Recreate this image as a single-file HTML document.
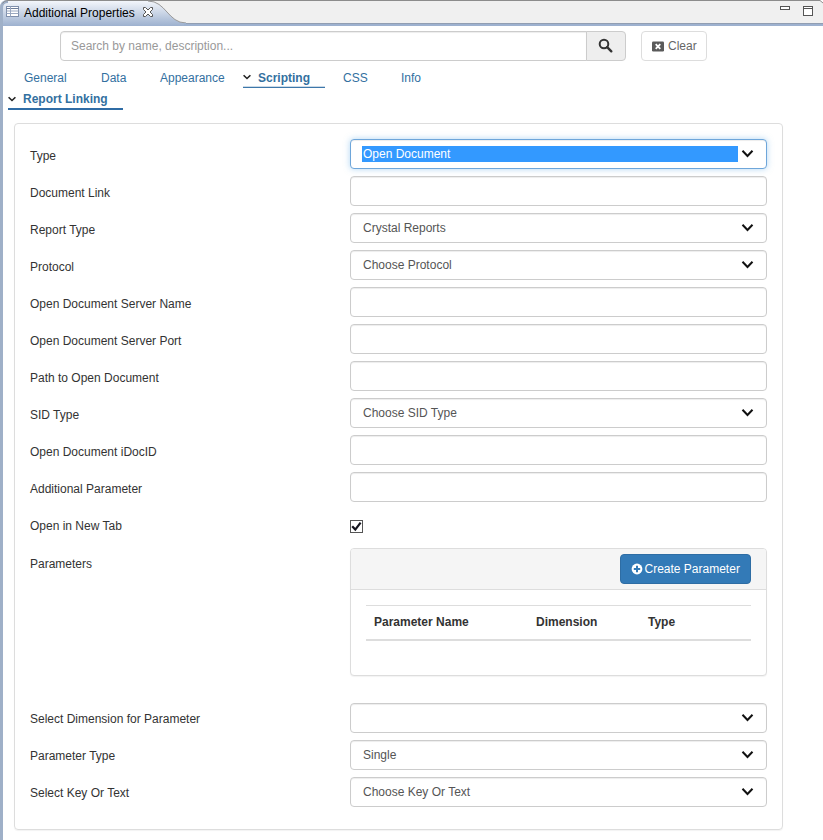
<!DOCTYPE html>
<html><head><meta charset="utf-8">
<style>
*{box-sizing:border-box}
html,body{margin:0;padding:0}
body{width:823px;height:840px;overflow:hidden;position:relative;background:#fff;font-family:"Liberation Sans",Arial,sans-serif;font-size:12px;color:#222}
.abs{position:absolute}
#hdr{display:none}
#lb{left:0;top:8px;width:3px;height:832px;background:#9fb0c8}
.tabtxt{left:24px;top:6px;font-size:12px;color:#000;white-space:nowrap}
#search{left:60px;top:31px;width:527px;height:30px;border:1px solid #ccc;border-radius:4px 0 0 4px;box-shadow:inset 0 1px 1px rgba(0,0,0,.075);padding:0 0 0 10px;line-height:28px;color:#999;font-size:12px}
#sbtn{left:586px;top:31px;width:40px;height:30px;border:1px solid #ccc;border-radius:0 4px 4px 0;background:#eee}
#clear{left:641px;top:31px;width:66px;height:30px;border:1px solid #ddd;border-radius:4px;background:#fff;color:#666;font-size:12px;line-height:28px}
.nav{top:71px;color:#33709f;font-size:12px;white-space:nowrap}
.panel{left:14px;top:123px;width:769px;height:707px;border:1px solid #ddd;border-radius:4px;box-shadow:0 1px 1px rgba(0,0,0,.05)}
.lbl{left:30px;font-size:12px;color:#333;white-space:nowrap}
.inp{left:350px;width:417px;height:30px;border:1px solid #ccc;border-radius:4px;box-shadow:inset 0 1px 1px rgba(0,0,0,.075);background:#fff;font-size:12px;color:#555;line-height:28px;padding-left:12px;white-space:nowrap}
.chev{position:absolute;right:12px;top:9px;width:13px;height:10px}
</style></head><body>
<div id="hdr" class="abs"></div>
<svg class="abs" style="left:0;top:0" width="823" height="27" viewBox="0 0 823 27">
<defs><linearGradient id="g" x1="0" y1="0" x2="0" y2="1"><stop offset="0" stop-color="#f3f6fb"/><stop offset="1" stop-color="#9db1cf"/></linearGradient></defs>
<rect x="0" y="0" width="823" height="7" fill="#fff"/>
<path d="M0,26 L0,7 Q0,0 7,0 L820,0 L823,3 L823,26 Z" fill="#f0f0f0"/>
<path d="M0,26 L0,7 Q0,1 7,1 L148,1 C166,1 168,23 186,23 L823,23 L823,26 Z" fill="url(#g)"/>
<path d="M1.5,8 Q1.5,1.5 8,1.5" fill="none" stroke="#9fb0c8" stroke-width="3"/><path d="M2.5,3.5 Q4,0.5 8,0.5 L820,0.5 L823,3" fill="none" stroke="#8c8c8c" stroke-width="1"/>
<path d="M148,1 C166,1 168,23 186,23" fill="none" stroke="#999" stroke-width="1"/>
<rect x="184" y="23" width="639" height="3" fill="#9db1cf"/>
<rect x="186" y="23" width="637" height="1" fill="#919eb2"/>
<g fill="none" stroke="#7f8fab" stroke-width="1"><rect x="6.5" y="6.5" width="12" height="10" fill="#fff"/><path d="M6.5,8.5h12" stroke="#6d7c98"/><path d="M6.5,11h12M6.5,13.5h12M10.5,6.5v10" stroke="#9aa8c0"/></g>
<g fill="#fff" stroke="#555" stroke-width="1"><path d="M143.5,7.5l2,0 2.5,2.5 2.5,-2.5 2,0 0,2 -2.5,2.5 2.5,2.5 0,2 -2,0 -2.5,-2.5 -2.5,2.5 -2,0 0,-2 2.5,-2.5 -2.5,-2.5z"/></g>
<rect x="780.5" y="6.5" width="9" height="3" fill="#fff" stroke="#555"/>
<rect x="803.5" y="6.5" width="9" height="9" fill="#fff" stroke="#555"/><rect x="803" y="8" width="10" height="1" fill="#555"/>
</svg>
<div id="lb" class="abs"></div>
<div class="abs tabtxt">Additional Properties</div>

<div id="search" class="abs">Search by name, description...</div>
<div id="sbtn" class="abs"><svg style="position:absolute;left:11px;top:6px" width="15" height="15" viewBox="0 0 15 15"><circle cx="6" cy="6" r="4.3" fill="none" stroke="#333" stroke-width="2"/><path d="M9.2,9.2L13.3,13.3" stroke="#333" stroke-width="2.4" stroke-linecap="round"/></svg></div>
<div id="clear" class="abs"><svg style="position:absolute;left:10px;top:9px" width="12" height="11" viewBox="0 0 12 11"><rect y="0.5" width="12" height="10" rx="1.2" fill="#5a5a5a"/><path d="M3.7,3.2L8.3,7.8M8.3,3.2L3.7,7.8" stroke="#fff" stroke-width="1.8"/></svg><span style="position:absolute;left:26px;top:0">Clear</span></div>

<div class="abs nav" style="left:24px">General</div>
<div class="abs nav" style="left:101px">Data</div>
<div class="abs nav" style="left:160px">Appearance</div>
<div class="abs nav" style="left:258px;font-weight:bold">Scripting</div>
<div class="abs nav" style="left:343px">CSS</div>
<div class="abs nav" style="left:401px">Info</div>
<div class="abs" style="left:243px;top:86px;width:82px;height:1px;background:#cbdae7"></div><div class="abs" style="left:243px;top:87px;width:82px;height:1px;background:#3d77aa"></div>
<svg class="abs" style="left:243px;top:74px" width="8" height="6" viewBox="0 0 8 6"><path d="M0.6,1.2L4,4.5L7.4,1.2" fill="none" stroke="#222" stroke-width="1.6"/></svg>
<div class="abs nav" style="left:23px;top:92px;font-weight:bold">Report Linking</div>
<div class="abs" style="left:8px;top:108px;width:115px;height:2px;background:#2f6ca5"></div>
<svg class="abs" style="left:8px;top:96px" width="8" height="6" viewBox="0 0 8 6"><path d="M0.6,1.2L4,4.5L7.4,1.2" fill="none" stroke="#222" stroke-width="1.6"/></svg>

<div class="abs panel"></div>
<div class="abs lbl" style="top:149px">Type</div>
<div class="abs inp" style="top:139px;border-color:#6ea6da;box-shadow:inset 0 1px 1px rgba(0,0,0,.075),0 0 6px rgba(102,175,233,.5)"><span style="position:absolute;left:11px;top:6px;width:376px;height:16px;background:#3399ff;color:#fff;line-height:16px;padding-left:1px">Open Document</span><svg class="chev" viewBox="0 0 13 10"><path d="M1.5,1.7L6.5,7L11.5,1.7" fill="none" stroke="#111" stroke-width="2"/></svg></div>
<div class="abs lbl" style="top:186px">Document Link</div>
<div class="abs inp" style="top:176px"></div>
<div class="abs lbl" style="top:223px">Report Type</div>
<div class="abs inp" style="top:213px">Crystal Reports<svg class="chev" viewBox="0 0 13 10"><path d="M1.5,1.7L6.5,7L11.5,1.7" fill="none" stroke="#111" stroke-width="2"/></svg></div>
<div class="abs lbl" style="top:260px">Protocol</div>
<div class="abs inp" style="top:250px">Choose Protocol<svg class="chev" viewBox="0 0 13 10"><path d="M1.5,1.7L6.5,7L11.5,1.7" fill="none" stroke="#111" stroke-width="2"/></svg></div>
<div class="abs lbl" style="top:297px">Open Document Server Name</div>
<div class="abs inp" style="top:287px"></div>
<div class="abs lbl" style="top:334px">Open Document Server Port</div>
<div class="abs inp" style="top:324px"></div>
<div class="abs lbl" style="top:371px">Path to Open Document</div>
<div class="abs inp" style="top:361px"></div>
<div class="abs lbl" style="top:408px">SID Type</div>
<div class="abs inp" style="top:398px">Choose SID Type<svg class="chev" viewBox="0 0 13 10"><path d="M1.5,1.7L6.5,7L11.5,1.7" fill="none" stroke="#111" stroke-width="2"/></svg></div>
<div class="abs lbl" style="top:445px">Open Document iDocID</div>
<div class="abs inp" style="top:435px"></div>
<div class="abs lbl" style="top:482px">Additional Parameter</div>
<div class="abs inp" style="top:472px"></div>
<div class="abs lbl" style="top:519px">Open in New Tab</div>
<div class="abs" style="left:350px;top:520px;width:13px;height:13px;border:1px solid #555;background:#fff"><svg style="position:absolute;left:0;top:0" width="11" height="11" viewBox="0 0 11 11"><path d="M1.2,5.2L4.3,8.6L9.6,1.6" fill="none" stroke="#14141e" stroke-width="2.2"/></svg></div>
<div class="abs lbl" style="top:557px">Parameters</div>
<div class="abs" style="left:350px;top:548px;width:417px;height:128px;border:1px solid #ddd;border-radius:4px;background:#fff;box-shadow:0 1px 1px rgba(0,0,0,.05)">
<div style="position:absolute;left:0;top:0;width:415px;height:41px;background:#f5f5f5;border-bottom:1px solid #ddd;border-radius:3px 3px 0 0"></div>
<div style="position:absolute;left:269px;top:5px;width:131px;height:30px;background:#337ab7;border:1px solid #2e6da4;border-radius:4px;color:#fff;font-size:12px;line-height:28px;white-space:nowrap"><svg style="position:absolute;left:9.5px;top:8px" width="12" height="12" viewBox="0 0 12 12"><circle cx="6" cy="6" r="5.4" fill="#fff"/><path d="M6,2.8V9.2M2.8,6H9.2" stroke="#337ab7" stroke-width="2"/></svg><span style="position:absolute;left:23.5px">Create Parameter</span></div>
<div style="position:absolute;left:15px;top:56px;width:385px;height:1px;background:#ddd"></div>
<div style="position:absolute;left:15px;top:90px;width:385px;height:2px;background:#ddd"></div>
<div style="position:absolute;left:23px;top:66px;font-weight:bold;color:#333;white-space:nowrap">Parameter Name</div>
<div style="position:absolute;left:185px;top:66px;font-weight:bold;color:#333;white-space:nowrap">Dimension</div>
<div style="position:absolute;left:297px;top:66px;font-weight:bold;color:#333;white-space:nowrap">Type</div>
</div>
<div class="abs lbl" style="top:712px">Select Dimension for Parameter</div>
<div class="abs inp" style="top:703px"><svg class="chev" viewBox="0 0 13 10"><path d="M1.5,1.7L6.5,7L11.5,1.7" fill="none" stroke="#111" stroke-width="2"/></svg></div>
<div class="abs lbl" style="top:749px">Parameter Type</div>
<div class="abs inp" style="top:740px">Single<svg class="chev" viewBox="0 0 13 10"><path d="M1.5,1.7L6.5,7L11.5,1.7" fill="none" stroke="#111" stroke-width="2"/></svg></div>
<div class="abs lbl" style="top:786px">Select Key Or Text</div>
<div class="abs inp" style="top:777px">Choose Key Or Text<svg class="chev" viewBox="0 0 13 10"><path d="M1.5,1.7L6.5,7L11.5,1.7" fill="none" stroke="#111" stroke-width="2"/></svg></div>
</body></html>
